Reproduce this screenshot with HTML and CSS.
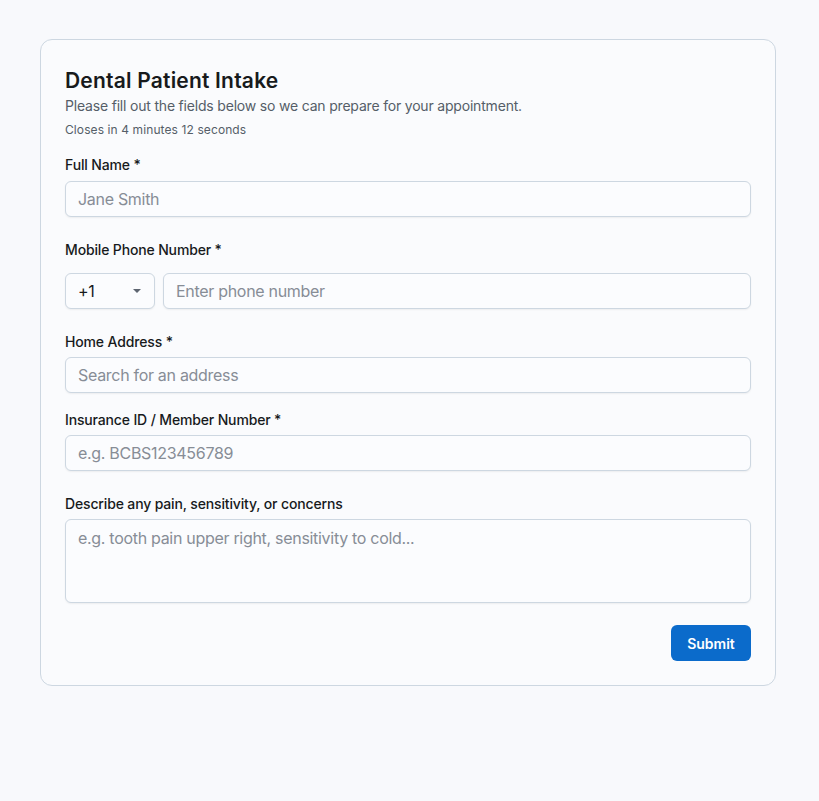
FILE: index.html
```html
<!DOCTYPE html>
<html lang="en">
<head>
<meta charset="utf-8">
<title>Dental Patient Intake</title>
<link rel="stylesheet" href="styles.css">
</head>
<body>
<main class="page">
  <form class="card">
    <header class="head">
      <h1 class="title">Dental Patient Intake</h1>
      <p class="subtitle">Please fill out the fields below so we can prepare for your appointment.</p>
      <p class="closes">Closes in 4 minutes 12 seconds</p>
    </header>

    <div class="field">
      <label class="label">Full Name *</label>
      <div class="input"><span class="ph">Jane Smith</span></div>
    </div>

    <div class="field">
      <label class="label label-phone">Mobile Phone Number *</label>
      <div class="phone-row">
        <div class="select">
          <span class="val">+1</span>
          <svg class="caret" width="8" height="4" viewBox="0 0 8 4"><path d="M0 0h8L4 4z" fill="#5d6570"/></svg>
        </div>
        <div class="input grow"><span class="ph">Enter phone number</span></div>
      </div>
    </div>

    <div class="field field-tight">
      <label class="label">Home Address *</label>
      <div class="input"><span class="ph">Search for an address</span></div>
    </div>

    <div class="field">
      <label class="label">Insurance ID / Member Number *</label>
      <div class="input"><span class="ph">e.g. BCBS123456789</span></div>
    </div>

    <div class="field field-last">
      <label class="label">Describe any pain, sensitivity, or concerns</label>
      <div class="textarea"><span class="ph">e.g. tooth pain upper right, sensitivity to cold...</span></div>
    </div>

    <div class="actions">
      <button type="button" class="btn">Submit</button>
    </div>
  </form>
</main>
</body>
</html>
```

FILE: styles.css
```css
* { box-sizing: border-box; }

html, body {
  margin: 0;
  padding: 0;
  background: #f8f9fc;
  font-family: Inter, "Noto Sans", sans-serif;
  color: #171a1c;
}

.page {
  padding: 39px 43px 40px 40px;
}

.card {
  width: 736px;
  background: #fafbfd;
  border: 1px solid #cdd7e1;
  border-radius: 12px;
  padding: 24px;
  display: flex;
  flex-direction: column;
}

.head {
  display: flex;
  flex-direction: column;
  margin-bottom: 16px;
}

.title {
  margin: 2px 0 0;
  font-size: 21px;
  line-height: 30px;
  font-weight: 600;
  letter-spacing: 0.2px;
  color: #171a1c;
}

.subtitle {
  margin: 0;
  font-size: 14px;
  line-height: 20px;
  letter-spacing: -0.19px;
  color: #555e68;
}

.closes {
  margin: 5px 0 0;
  font-size: 12px;
  line-height: 18px;
  letter-spacing: 0.1px;
  color: #555e68;
}

.field {
  display: flex;
  flex-direction: column;
  margin-bottom: 23px;
}

.field-tight {
  margin-bottom: 17px;
}

.field-last {
  margin-bottom: 22px;
}

.label {
  font-size: 14px;
  line-height: 20px;
  font-weight: 470;
  letter-spacing: -0.15px;
  color: #171a1c;
  margin-bottom: 5px;
}

.field:first-of-type .label {
  margin-bottom: 6px;
}

.label-phone {
  margin-bottom: 13px;
}

.input,
.select,
.textarea {
  background: #fbfcfe;
  border: 1px solid #cdd7e1;
  border-radius: 6px;
  box-shadow: 0 1px 2px rgba(21, 21, 21, 0.06);
  font-size: 16px;
  letter-spacing: -0.3px;
}

.input {
  height: 36px;
  padding: 0 12px;
  display: flex;
  align-items: center;
}

.ph {
  color: #878d96;
}

.phone-row {
  display: flex;
  gap: 8px;
}

.select {
  width: 90px;
  height: 36px;
  padding: 0 13px 0 12px;
  display: flex;
  align-items: center;
  justify-content: space-between;
  color: #171a1c;
}

.caret {
  display: block;
}

.grow {
  flex: 1;
}

.textarea {
  height: 84px;
  padding: 6px 12px;
  line-height: 24px;
}

.actions {
  display: flex;
  justify-content: flex-end;
}

.btn {
  height: 36px;
  width: 80px;
  padding: 0;
  border: none;
  border-radius: 6px;
  background: #0b6bcb;
  color: #fff;
  font-family: Inter, "Noto Sans", sans-serif;
  font-size: 14px;
  font-weight: 600;
}
```
